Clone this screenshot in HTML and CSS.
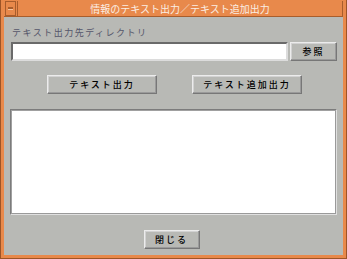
FILE: index.html
```html
<!DOCTYPE html>
<html lang="ja">
<head>
    <meta charset="UTF-8">
    <title>情報のテキスト出力／テキスト追加出力</title>
    <link rel="stylesheet" href="styles.css">
</head>
<body>
    <div class="window">
        <div class="titlebar">
            <div class="menu-box"><span class="dash"></span></div>
            <div class="title">情報のテキスト出力／テキスト追加出力</div>
        </div>
        <div class="client">
            <div class="label">テキスト出力先ディレクトリ</div>
            <div class="dir-row">
                <div class="field"></div>
                <button class="btn btn-browse">参照</button>
            </div>
            <div class="action-row">
                <button class="btn btn-wide">テキスト出力</button>
                <button class="btn btn-wide">テキスト追加出力</button>
            </div>
            <div class="output"></div>
            <div class="close-row">
                <button class="btn btn-close">閉じる</button>
            </div>
        </div>
    </div>
</body>
</html>
```

FILE: styles.css
```css
body {
    margin: 0;
    background: #ffffff;
    font-family: "Noto Sans CJK JP", "DejaVu Sans", sans-serif;
}
.window {
    width: 347px;
    height: 259px;
    box-sizing: border-box;
    background: #e8894b;
    border: 1px solid #9c5427;
    border-top: none;
    padding: 1px 3px 3px 3px;
    display: flex;
    flex-direction: column;
}
.titlebar {
    height: 15px;
    display: flex;
    background: #e8894b;
    border-bottom: 1px solid #a85d2c;
}
.menu-box {
    width: 11px;
    box-sizing: border-box;
    border: 1px solid #a85d2c;
    margin-left: 1px;
    display: flex;
    align-items: center;
    justify-content: center;
}
.dash {
    width: 5px;
    height: 2px;
    background: #a85d2c;
    border-bottom: 1px solid #f3c29c;
}
.title {
    flex: 1;
    text-align: center;
    color: #fbeee4;
    font-size: 10px;
    line-height: 15px;
    margin-left: 1px;
    border-left: 1px solid #a85d2c;
    border-right: 1px solid #a85d2c;
}
.client {
    flex: 1;
    background: #b8b9b5;
    padding: 0 6px 0 7px;
    display: flex;
    flex-direction: column;
}
.label {
    margin-top: 10px;
    font-size: 9px;
    letter-spacing: 1.5px;
    line-height: 12px;
    color: #55566a;
    padding-left: 1px;
}
.dir-row {
    display: flex;
    margin-top: 3px;
    height: 19px;
}
.field {
    width: 278px;
    box-sizing: border-box;
    background: #ffffff;
    border: 2px solid #6a6a6a;
    border-right-color: #dcdcdc;
    border-bottom-color: #dcdcdc;
}
.btn {
    box-sizing: border-box;
    background: #b8b9b5;
    border: 1px solid #ececec;
    border-right-color: #777777;
    border-bottom-color: #777777;
    box-shadow: inset -1px -1px 0 #9a9a9a, inset 1px 1px 0 #d2d2d2;
    font-family: "Noto Sans CJK JP", sans-serif;
    font-size: 9px;
    font-weight: 500;
    letter-spacing: 2px;
    color: #000000;
    padding: 0;
    height: 19px;
}
.btn-browse {
    width: 47px;
    margin-left: 2px;
}
.action-row {
    display: flex;
    margin-top: 14px;
    padding-left: 36px;
    gap: 35px;
}
.btn-wide {
    width: 110px;
}
.output {
    margin-top: 15px;
    width: 327px;
    height: 106px;
    box-sizing: border-box;
    background: #ffffff;
    border: 1px solid #7c7c7c;
    border-right-color: #e0e0e0;
    border-bottom-color: #e0e0e0;
    box-shadow: inset 1px 1px 0 #a0a0a0, inset -1px -1px 0 #9a9a9a;
    margin-left: -1px;
}
.close-row {
    display: flex;
    justify-content: center;
    margin-top: 15px;
    padding-right: 5px;
}
.btn-close {
    width: 56px;
}
```
